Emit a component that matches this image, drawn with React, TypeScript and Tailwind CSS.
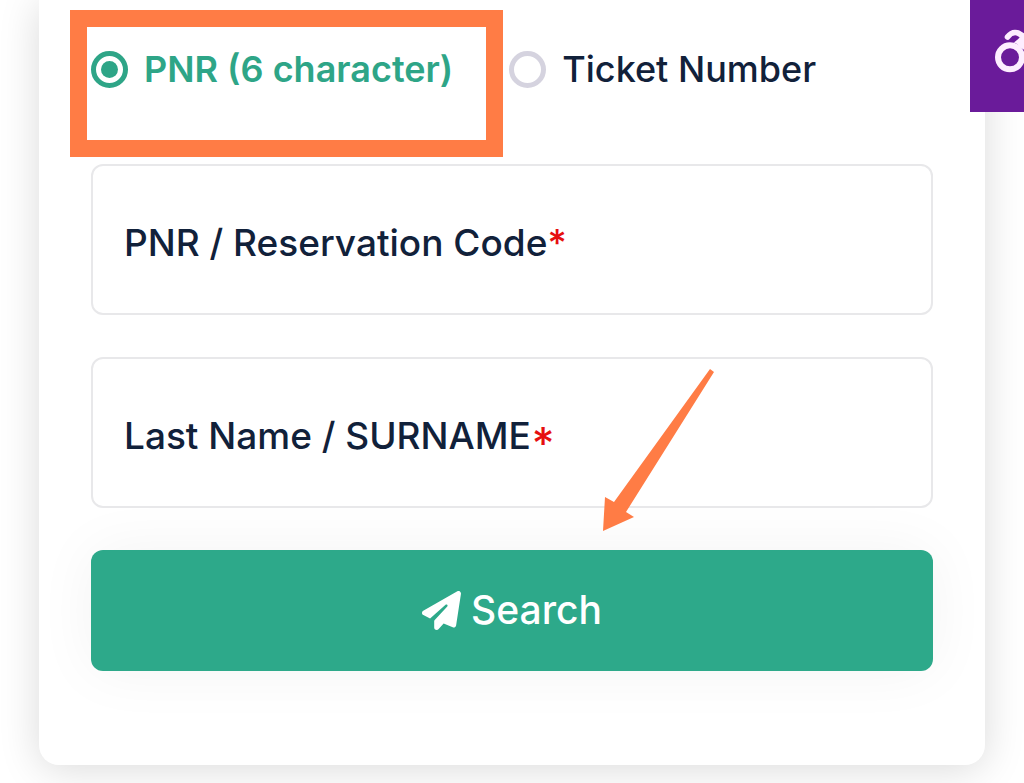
import { useState } from "react";
import { FaPaperPlane } from "react-icons/fa6";

type Mode = "pnr" | "ticket";

const options: { value: Mode; label: string }[] = [
  { value: "pnr", label: "PNR (6 character)" },
  { value: "ticket", label: "Ticket Number" },
];

function SearchOption({
  value,
  label,
  checked,
  onSelect,
}: {
  value: Mode;
  label: string;
  checked: boolean;
  onSelect: (value: Mode) => void;
}) {
  return (
    <div className="relative flex h-[42px] items-center gap-4">
      <input
        type="radio"
        id={value}
        name="mode"
        checked={checked}
        onChange={() => onSelect(value)}
        className="size-[37px] shrink-0 appearance-none rounded-full border-[5px] border-[#d5d3df] bg-white bg-clip-content p-[5px] checked:border-[#2ea587] checked:bg-[#2ea587]"
      />
      <label
        htmlFor={value}
        className={
          checked
            ? "text-4xl font-semibold whitespace-nowrap text-[#2ea587]"
            : "text-4xl font-medium whitespace-nowrap text-[#11213a]"
        }
      >
        {label}
      </label>
      {checked && (
        <span
          aria-hidden="true"
          className="pointer-events-none absolute -top-[38px] -right-[50px] -left-[21px] h-[147px] border-[17px] border-[#ff7c45]"
        />
      )}
    </div>
  );
}

function Field({ id, label }: { id: string; label: string }) {
  return (
    <div className="grid">
      <input
        id={id}
        type="text"
        required
        className="h-[151px] w-full rounded-xl border-2 border-[#e8e8ea] bg-white px-8 text-[37px] text-[#11213a] outline-none [grid-area:1/1]"
      />
      <label
        htmlFor={id}
        className="ml-[33px] self-center justify-self-start pt-1.5 text-[37px] font-medium text-[#11213a] [grid-area:1/1]"
      >
        {label}
        <span className={label.endsWith("E") ? "text-[#e60f0f] [font-feature-settings:'case']" : "text-[#e60f0f]"}>*</span>
      </label>
    </div>
  );
}

function Arrow() {
  return (
    <svg
      aria-hidden="true"
      viewBox="0 0 114 164"
      className="pointer-events-none absolute top-[204px] right-[219px] z-10 w-[114px]"
    >
      <path d="M110 1L114 4L26 144L34 149L3 163L5 129L14 134Z" fill="#ff7c45" />
    </svg>
  );
}

function SideTab() {
  return (
    <button
      type="button"
      aria-label="Accessibility"
      className="absolute top-0 right-0 flex h-28 w-[54px] justify-end overflow-hidden bg-[#6a1b9a]"
    >
      <svg viewBox="0 0 30 80" className="h-20 w-[30px]" fill="none" stroke="#fdeeff" strokeLinecap="round" strokeLinejoin="round">
        <circle cx="16" cy="57.3" r="12" strokeWidth="6" />
        <path d="M13.5 37Q18 31 24 33L34 39" strokeWidth="5.6" />
        <path d="M20 42.5L26 37L34 38V52L27 48L23 44Z" fill="#fdeeff" stroke="none" />
        <path d="M19.5 38.5L24 37.8L21 40.5" stroke="#6a1b9a" strokeWidth="1.6" />
      </svg>
    </button>
  );
}

export default function App() {
  const [mode, setMode] = useState<Mode>("pnr");

  return (
    <main className="relative overflow-hidden bg-white px-[39px] pb-[18px] font-['Inter',sans-serif]">
      <form
        onSubmit={(event) => event.preventDefault()}
        className="flex flex-col gap-[42px] rounded-b-[20px] bg-white px-[52px] pt-12 pb-[94px] shadow-[0_4px_40px_rgba(0,0,0,0.15)]"
      >
        <div role="radiogroup" aria-label="Search by" className="mb-8 flex h-[42px] items-center gap-14">
          {options.map((option) => (
            <SearchOption
              key={option.value}
              value={option.value}
              label={option.label}
              checked={mode === option.value}
              onSelect={setMode}
            />
          ))}
        </div>
        <div className="relative flex flex-col gap-[42px]">
          <Field id="code" label="PNR / Reservation Code" />
          <Field id="surname" label="Last Name / SURNAME" />
          <Arrow />
        </div>
        <button
          type="submit"
          className="flex h-[121px] items-center justify-center gap-2.5 rounded-xl bg-[#2da98a] text-[39px] font-medium text-white shadow-[0_0_60px_rgba(0,0,0,0.05)]"
        >
          <FaPaperPlane aria-hidden="true" className="size-[39px]" />
          Search
        </button>
      </form>
      <SideTab />
    </main>
  );
}
